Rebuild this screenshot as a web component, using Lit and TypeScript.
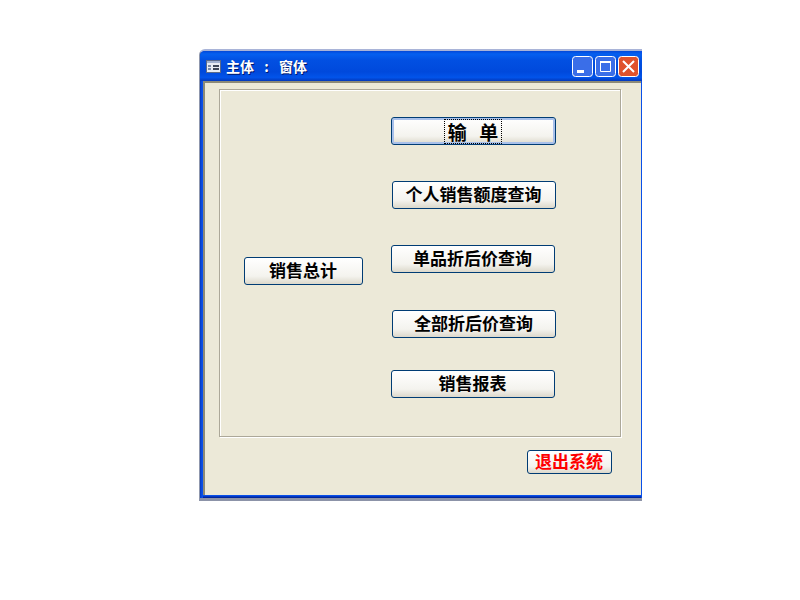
import { LitElement, html, css } from 'lit';
import { customElement } from 'lit/decorators.js';

@customElement('app-root')
export class AppRoot extends LitElement {
  static override styles = css`
    :host {
      display: block;
      width: 800px;
      height: 600px;
      background: #fff;
      font-family: 'Liberation Sans', 'Noto Sans CJK SC', sans-serif;
      padding: 49px 0 0 199px;
      box-sizing: border-box;
    }

    .window {
      width: 443px;
      height: 452px;
      display: flex;
      flex-direction: column;
      box-sizing: border-box;
      border-top: 2px solid #a9b4d8;
      border-left: 1px solid #8f97ad;
      border-bottom: 3px solid #8c93a8;
      border-radius: 6px 0 0 0;
      background: linear-gradient(90deg, #0238c0, #0a50e8 2px);
    }

    .titlebar {
      height: 30px;
      flex: none;
      display: flex;
      align-items: center;
      padding: 0 3px 0 6px;
      gap: 5px;
      border-radius: 5px 5px 0 0;
      background: linear-gradient(
        #0348d8 0%,
        #0560f0 10%,
        #0250e2 30%,
        #0049dc 70%,
        #0254ea 88%,
        #0338bc 100%
      );
    }

    .sys-icon {
      flex: none;
    }

    .title {
      flex: 1;
      color: #fff;
      font-size: 14px;
      font-weight: 700;
      font-family: 'Noto Sans CJK SC', sans-serif;
      white-space: pre;
      text-shadow: 1px 1px 0 #00186c;
    }

    .title .colon {
      display: inline-block;
      width: 25px;
      text-align: center;
    }

    .caption {
      flex: none;
      display: flex;
      gap: 2px;
    }

    .caption svg {
      display: block;
    }

    .client {
      flex: 1;
      display: flex;
      margin: 0 1px 3px 3px;
      border-left: 2px solid #8c8a78;
      border-top: 2px solid #8c8a78;
      background: #ece9d8;
      flex-direction: column;
      padding: 6px 19px 0 14px;
      min-height: 0;
      box-sizing: border-box;
      box-shadow: 0 1px 0 #0a50e8, 0 2px 0 #0338c4, 0 3px 0 #02269c;
    }

    .frame {
      width: 402px;
      height: 348px;
      flex: none;
      box-sizing: border-box;
      border: 1px solid #aca899;
      box-shadow: 1px 1px 0 #fff, inset 1px 1px 0 #fff;
      display: flex;
      padding: 27px 0 0 24px;
    }

    .left {
      width: 147px;
      flex: none;
      padding-top: 140px;
    }

    .right {
      display: flex;
      flex-direction: column;
      align-items: flex-start;
    }

    .btn {
      box-sizing: border-box;
      height: 28px;
      border: 1px solid #003c74;
      border-radius: 3px;
      background: linear-gradient(#ffffff, #f4f3ee 70%, #dcd8cb);
      color: #000;
      font: 700 17px/1 'Noto Sans CJK SC', sans-serif;
      padding: 0 1px 3px 0;
      display: flex;
      align-items: center;
      justify-content: center;
      white-space: pre;
    }

    .total {
      width: 119px;
    }

    .enter {
      width: 165px;
      box-shadow: inset 0 0 0 2px #a8c0ea;
      font-size: 19px;
      padding: 0 1px 0 0;
    }

    .enter span {
      outline: 1px dotted #000;
      padding: 2px 3px;
      word-spacing: 8px;
    }

    .wide {
      width: 164px;
      margin-left: 1px;
    }

    .plain {
      width: 164px;
    }

    .gap-36 {
      margin-top: 36px;
    }

    .gap-37 {
      margin-top: 37px;
    }

    .gap-32 {
      margin-top: 32px;
    }

    .footer {
      display: flex;
      justify-content: flex-end;
      padding: 13px 9px 0 0;
      width: 402px;
      box-sizing: border-box;
    }

    .exit {
      width: 85px;
      height: 24px;
      color: #ff0000;
    }
  `;

  override render() {
    return html`
      <div class="window">
        <div class="titlebar">
          <svg class="sys-icon" width="15" height="13" viewBox="0 0 15 13">
            <rect x="0.5" y="0.5" width="14" height="12" fill="#e8ecf4" stroke="#5a6a8a" />
            <rect x="1" y="1" width="13" height="2" fill="#9fb0d0" />
            <path d="M2 5h3v2H2zM2 8h3v2H2z" fill="#7a8aa8" />
            <path d="M7 5h6v2H7zM7 8h6v2H7z" fill="#3c4658" />
          </svg>
          <span class="title">主体<span class="colon">:</span>窗体</span>
          <div class="caption">
            <svg width="21" height="21" viewBox="0 0 21 21">
              <rect x="0.5" y="0.5" width="20" height="20" rx="3" fill="#3a6ee8" stroke="#fff" />
              <rect x="5" y="14" width="7" height="3" fill="#fff" />
            </svg>
            <svg width="21" height="21" viewBox="0 0 21 21">
              <rect x="0.5" y="0.5" width="20" height="20" rx="3" fill="#3a6ee8" stroke="#fff" />
              <path d="M5.5 6.5h10v9h-10z" fill="none" stroke="#fff" />
              <rect x="5" y="5" width="11" height="2" fill="#fff" />
            </svg>
            <svg width="21" height="21" viewBox="0 0 21 21">
              <rect x="0.5" y="0.5" width="20" height="20" rx="3" fill="#e0522c" stroke="#fff" />
              <path d="M5 5l11 11M16 5L5 16" stroke="#fff" stroke-width="2" />
            </svg>
          </div>
        </div>
        <div class="client">
          <div class="frame">
            <div class="left">
              <button class="btn total">销售总计</button>
            </div>
            <div class="right">
              <button class="btn enter"><span>输 单</span></button>
              <button class="btn wide gap-36">个人销售额度查询</button>
              <button class="btn plain gap-36">单品折后价查询</button>
              <button class="btn wide gap-37">全部折后价查询</button>
              <button class="btn plain gap-32">销售报表</button>
            </div>
          </div>
          <div class="footer">
            <button class="btn exit">退出系统</button>
          </div>
        </div>
      </div>
    `;
  }
}
